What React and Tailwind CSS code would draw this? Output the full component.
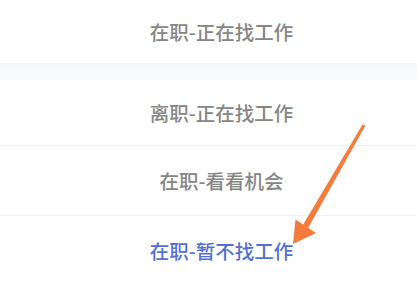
import React from "react";

const options = [
  { label: "离职-正在找工作", active: false, h: "h-[66px]" },
  { label: "在职-看看机会", active: false, h: "h-[70px]" },
  { label: "在职-暂不找工作", active: true, h: "h-[70px]" },
];

const App = () => {
  return (
    <div
      className="relative w-[417px] h-[286px] overflow-hidden bg-white"
      style={{ fontFamily: '"Noto Sans CJK SC", "Noto Sans", sans-serif' }}
    >
      {/* current status */}
      <div className="h-[63px] pl-[26px] flex items-center justify-center text-[19.5px] font-medium text-[#868686]">
        在职-正在找工作
      </div>
      <div className="h-[17px] bg-gradient-to-b from-[#f5f8fa] to-[#fafcfd]"></div>

      {/* options */}
      <div className="flex flex-col">
        {options.map((item, i) => (
          <div
            key={item.label}
            className={`${item.h} pl-[26px] flex items-center justify-center text-[19.5px] font-medium ${
              i < options.length - 1 ? "border-b border-[#f1f1f1]" : ""
            } ${item.active ? "text-[#5272d2]" : "text-[#868686]"}`}
          >
            {item.label}
          </div>
        ))}
      </div>

      {/* annotation arrow */}
      <svg className="absolute left-0 top-0 pointer-events-none" width="417" height="286" viewBox="0 0 417 286">
        <polygon points="365.3,125.8 362.7,124.2 302.9,225 308.1,228" fill="#f47b3a" />
        <polygon points="293,244 295.5,219.5 316,233" fill="#f47b3a" />
      </svg>
    </div>
  );
};

export default App;
